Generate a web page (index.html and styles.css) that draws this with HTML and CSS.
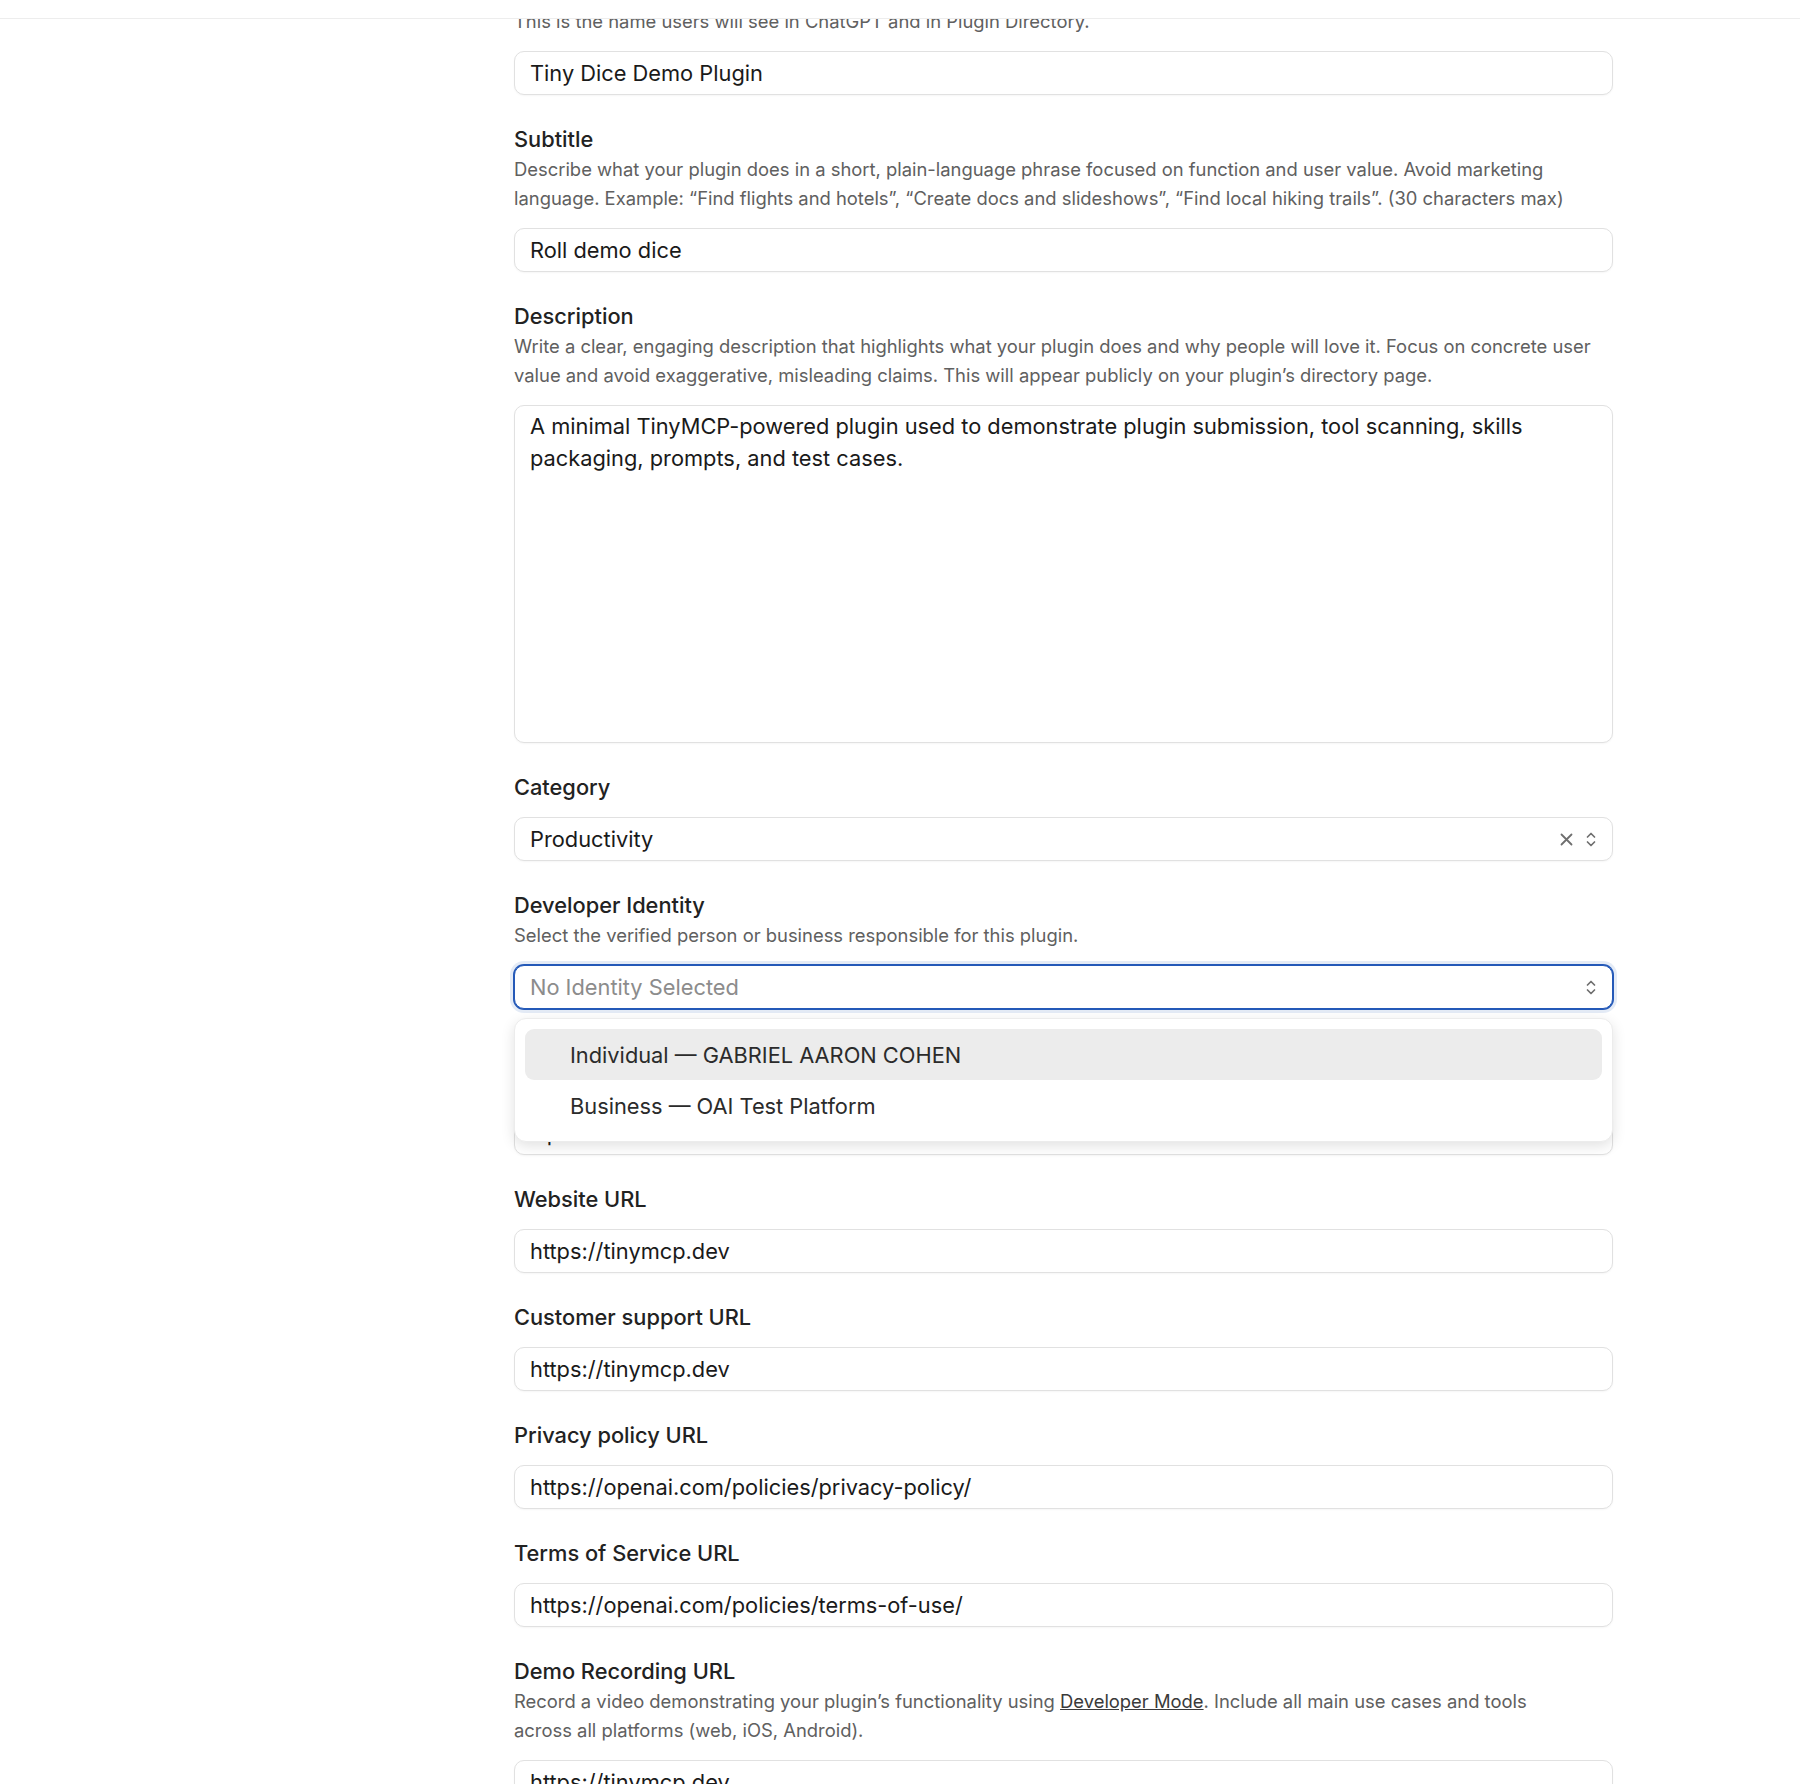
FILE: index.html
```
<!DOCTYPE html>
<html lang="en">
<head>
    <meta charset="UTF-8">
    <meta name="viewport" content="width=device-width, initial-scale=1.0">
    <title>Plugin Details</title>
    <link rel="stylesheet" href="styles.css">
</head>
<body>
    <header class="topbar"></header>

    <div class="viewport">
        <div class="layout">
            <aside class="sidebar"></aside>

            <main class="form">
                <!-- Name -->
                <div class="field">
                    <label class="label">Plugin name</label>
                    <p class="hint">This is the name users will see in ChatGPT and in Plugin Directory.</p>
                    <input class="input after-hint" type="text" value="Tiny Dice Demo Plugin">
                </div>

                <!-- Subtitle -->
                <div class="field">
                    <label class="label">Subtitle</label>
                    <p class="hint">Describe what your plugin does in a short, plain-language phrase focused on function and user value. Avoid marketing language. Example: “Find flights and hotels”, “Create docs and slideshows”, “Find local hiking trails”. (30 characters max)</p>
                    <input class="input after-hint" type="text" value="Roll demo dice">
                </div>

                <!-- Description -->
                <div class="field">
                    <label class="label">Description</label>
                    <p class="hint">Write a clear, engaging description that highlights what your plugin does and why people will love it. Focus on concrete user value and avoid exaggerative, misleading claims. This will appear publicly on your plugin’s directory page.</p>
                    <textarea class="input textarea after-hint">A minimal TinyMCP-powered plugin used to demonstrate plugin submission, tool scanning, skills packaging, prompts, and test cases.</textarea>
                </div>

                <!-- Category -->
                <div class="field">
                    <label class="label">Category</label>
                    <div class="input select">
                        <span class="select-value">Productivity</span>
                        <span class="select-icons">
                            <svg class="icon-clear" width="13" height="13" viewBox="0 0 13 13"><path d="M1.5 1.5 L11.5 11.5 M11.5 1.5 L1.5 11.5"/></svg>
                            <svg class="icon-chevrons" width="10" height="17" viewBox="0 0 10 17"><path d="M1.5 6 L5 2.5 L8.5 6 M1.5 11 L5 14.5 L8.5 11"/></svg>
                        </span>
                    </div>
                </div>

                <!-- Developer identity -->
                <div class="field">
                    <label class="label">Developer Identity</label>
                    <p class="hint">Select the verified person or business responsible for this plugin.</p>
                    <div class="select-wrap after-hint">
                        <div class="input select focused">
                            <span class="select-value placeholder">No Identity Selected</span>
                            <span class="select-icons">
                                <svg class="icon-chevrons" width="10" height="17" viewBox="0 0 10 17"><path d="M1.5 6 L5 2.5 L8.5 6 M1.5 11 L5 14.5 L8.5 11"/></svg>
                            </span>
                        </div>
                        <ul class="menu">
                            <li class="menu-item active">Individual — GABRIEL AARON COHEN</li>
                            <li class="menu-item">Business — OAI Test Platform</li>
                        </ul>
                    </div>
                </div>

                <!-- Company name (under the open menu) -->
                <div class="field">
                    <label class="label">Company name</label>
                    <p class="hint">The company name shown on your plugin listing.</p>
                    <input class="input after-hint tight" type="text" value="OpenAI">
                </div>

                <div class="field">
                    <label class="label">Website URL</label>
                    <input class="input" type="text" value="https://tinymcp.dev">
                </div>

                <div class="field">
                    <label class="label">Customer support URL</label>
                    <input class="input" type="text" value="https://tinymcp.dev">
                </div>

                <div class="field">
                    <label class="label">Privacy policy URL</label>
                    <input class="input" type="text" value="https://openai.com/policies/privacy-policy/">
                </div>

                <div class="field">
                    <label class="label">Terms of Service URL</label>
                    <input class="input" type="text" value="https://openai.com/policies/terms-of-use/">
                </div>

                <div class="field">
                    <label class="label">Demo Recording URL</label>
                    <p class="hint hint-narrow">Record a video demonstrating your plugin’s functionality using <a href="#" class="hint-link">Developer Mode</a>. Include all main use cases and tools across all platforms (web, iOS, Android).</p>
                    <input class="input after-hint" type="text" value="https://tinymcp.dev">
                </div>
            </main>
        </div>
    </div>
</body>
</html>
```

FILE: styles.css
```
* {
    box-sizing: border-box;
}
body {
    margin: 0;
    height: 100vh;
    overflow: hidden;
    background: #fff;
    font-family: Inter, "Noto Sans", sans-serif;
    color: #1a1a1a;
}
.topbar {
    height: 19px;
    background: #fff;
    border-bottom: 1px solid #ededed;
}
.viewport {
    height: calc(100vh - 19px);
    overflow: hidden;
}
.layout {
    display: flex;
}
.sidebar {
    width: 514px;
    flex-shrink: 0;
}
.form {
    width: 1099px;
    display: flex;
    flex-direction: column;
    gap: 32px;
    margin-top: -40px;
}
.field {
    display: flex;
    flex-direction: column;
}
.label {
    font-size: 21.8px;
    line-height: 24px;
    font-weight: 500;
    color: #222;
}
.hint {
    margin: 4px 0 0;
    font-size: 18.4px;
    line-height: 29px;
    color: #606060;
}
.hint-narrow {
    max-width: 1060px;
}
.hint-link {
    color: #3a3a3a;
    text-decoration: underline;
}
.input {
    display: block;
    width: 100%;
    height: 44px;
    margin-top: 18px;
    padding: 0 15px;
    border: 1px solid #e1e1e1;
    border-radius: 10px;
    background: #fff;
    box-shadow: 0 1px 2px rgba(0, 0, 0, 0.04);
    font-family: inherit;
    font-size: 21.8px;
    color: #1a1a1a;
    outline: none;
}
.after-hint {
    margin-top: 15px;
}
.tight {
    margin-top: 13px;
}
.textarea {
    height: 338px;
    padding: 4px 15px;
    line-height: 32px;
    resize: none;
}
.select-wrap {
    position: relative;
}
.select-wrap .input {
    margin-top: 0;
}
.select {
    display: flex;
    align-items: center;
    justify-content: space-between;
    padding-right: 16px;
}
.select.focused {
    border-color: #2459b8;
    box-shadow: 0 0 0 1px #2459b8, 0 0 0 4px rgba(36, 89, 184, 0.12);
}
.placeholder {
    color: #8c8c8c;
}
.select-icons {
    display: flex;
    align-items: center;
    gap: 13px;
}
.select-icons svg {
    fill: none;
    stroke: #6f6f6f;
    stroke-linecap: round;
    stroke-linejoin: round;
}
.icon-clear {
    stroke-width: 1.8;
}
.icon-chevrons {
    stroke-width: 1.7;
}
.menu {
    position: absolute;
    top: calc(100% + 9px);
    left: 0;
    right: 0;
    z-index: 5;
    margin: 0;
    padding: 10px;
    list-style: none;
    background: #fff;
    border: 1px solid #ececec;
    border-radius: 12px;
    box-shadow: 0 4px 14px rgba(0, 0, 0, 0.12);
}
.menu-item {
    height: 51px;
    display: flex;
    align-items: center;
    padding-left: 45px;
    border-radius: 9px;
    font-size: 21.8px;
    color: #2b2b2b;
}
.menu-item.active {
    background: #ececec;
}
```
